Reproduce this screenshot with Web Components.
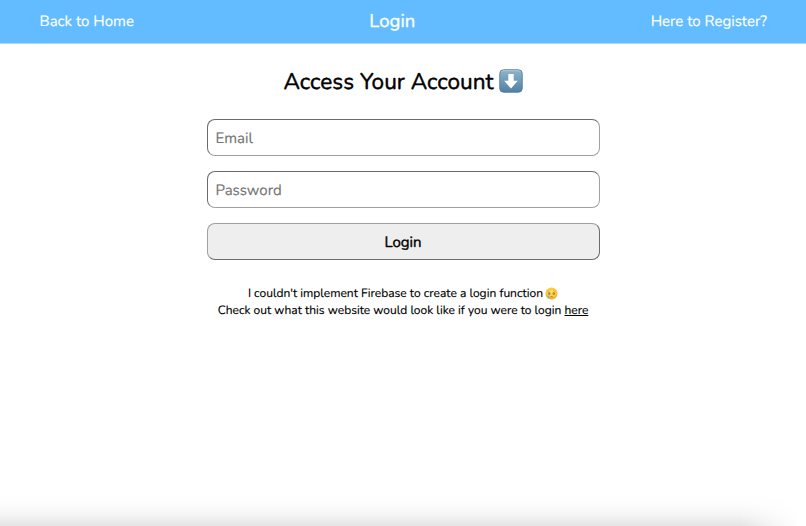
<!DOCTYPE html>
<html lang="en">
<head>
<meta charset="UTF-8">
<title>Login</title>
<style>
    body {
        margin: 0;
        height: 526px;
        overflow: hidden;
        background: #fff;
        color: #000;
        font-family: Nunito, Lato, sans-serif;
        text-rendering: geometricPrecision;
    }
</style>
</head>
<body>
<login-page>
    <nav-bar slot="nav">
        <span slot="left">Back to Home</span>
        <span slot="title">Login</span>
        <span slot="right">Here to Register?</span>
    </nav-bar>
    <page-heading>Access Your Account</page-heading>
    <login-form>
        <text-field placeholder="Email" type="email"></text-field>
        <text-field placeholder="Password" type="password"></text-field>
        <submit-button>Login</submit-button>
    </login-form>
    <login-note></login-note>
</login-page>

<script>
class LoginPage extends HTMLElement {
    constructor() {
        super();
        this.attachShadow({ mode: 'open' });
        this.shadowRoot.innerHTML = `
            <style>
                :host {
                    display: flex;
                    flex-direction: column;
                    height: 526px;
                }
                main {
                    flex: 1;
                    display: flex;
                    flex-direction: column;
                    align-items: center;
                }
                .shade {
                    height: 30px;
                    background: linear-gradient(to bottom, rgba(0, 0, 0, 0) 0%, rgba(0, 0, 0, 0.012) 30%, rgba(0, 0, 0, 0.045) 65%, rgba(0, 0, 0, 0.105) 100%);
                    -webkit-mask-image: linear-gradient(to right, #000 740px, rgba(0, 0, 0, 0.4) 772px, transparent 800px);
                    mask-image: linear-gradient(to right, #000 740px, rgba(0, 0, 0, 0.4) 772px, transparent 800px);
                }
            </style>
            <slot name="nav"></slot>
            <main><slot></slot></main>
            <div class="shade"></div>
        `;
    }
}

class NavBar extends HTMLElement {
    constructor() {
        super();
        this.attachShadow({ mode: 'open' });
        this.shadowRoot.innerHTML = `
            <style>
                :host {
                    display: flex;
                    justify-content: space-between;
                    align-items: center;
                    box-sizing: border-box;
                    height: 44px;
                    padding: 0 39px 0 39.5px;
                    background: linear-gradient(#62bcff 43px, #a8daff 43px);
                    color: #fff;
                    font-size: 15px;
                    line-height: 22px;
                    -webkit-text-stroke: 0.15px #fff;
                }
                .title {
                    padding-bottom: 2px;
                    font-size: 18.5px;
                    -webkit-text-stroke: 0.4px #fff;
                }
            </style>
            <div><slot name="left"></slot></div>
            <div class="title"><slot name="title"></slot></div>
            <div><slot name="right"></slot></div>
        `;
    }
}

class PageHeading extends HTMLElement {
    constructor() {
        super();
        this.attachShadow({ mode: 'open' });
        this.shadowRoot.innerHTML = `
            <style>
                :host {
                    display: flex;
                    align-items: center;
                    gap: 5px;
                    height: 32px;
                    margin-top: 21px;
                }
                h1 {
                    margin: 0;
                    padding-top: 1px;
                    font-size: 22.6px;
                    font-weight: 400;
                    line-height: 32px;
                    -webkit-text-stroke: 0.45px #000;
                }
                svg {
                    display: block;
                    margin-top: -1px;
                }
            </style>
            <h1><slot></slot></h1>
            <svg width="24" height="24" viewBox="0 0 24 24">
                <defs>
                    <linearGradient id="key" x1="0" y1="0" x2="0" y2="1">
                        <stop offset="0" stop-color="#8db5cc"/>
                        <stop offset="1" stop-color="#527fa4"/>
                    </linearGradient>
                </defs>
                <rect x="0.7" y="0.7" width="22.6" height="22.6" rx="4" fill="url(#key)" stroke="#55778f" stroke-width="0.8"/>
                <path d="M2.5 3.2 Q3 1.7 5 1.7 H19 Q21 1.7 21.5 3.2" fill="none" stroke="#b7d2e0" stroke-width="0.7"/>
                <path d="M9.3 5 H14.7 V11.7 H18.8 L12 19.6 L5.2 11.7 H9.3 Z" fill="#fff"/>
            </svg>
        `;
    }
}

class LoginForm extends HTMLElement {
    constructor() {
        super();
        this.attachShadow({ mode: 'open' });
        this.shadowRoot.innerHTML = `
            <style>
                :host {
                    display: block;
                    width: 393px;
                    margin-top: 22px;
                }
                form {
                    display: flex;
                    flex-direction: column;
                    gap: 15px;
                }
            </style>
            <form><slot></slot></form>
        `;
    }
}

class TextField extends HTMLElement {
    constructor() {
        super();
        this.attachShadow({ mode: 'open' });
        this.shadowRoot.innerHTML = `
            <style>
                :host {
                    display: block;
                    height: 37px;
                }
                input {
                    display: block;
                    box-sizing: border-box;
                    width: 100%;
                    height: 37px;
                    padding: 2px 8px 0;
                    border: 1px solid;
                    border-color: #6c6c6c #a0a0a0 #a0a0a0 #6c6c6c;
                    border-radius: 8px;
                    background: #fff;
                    font: inherit;
                    font-size: 15px;
                    text-rendering: inherit;
                    outline: none;
                }
                input::placeholder {
                    color: #757575;
                    opacity: 1;
                    -webkit-text-stroke: 0.15px #757575;
                }
            </style>
            <input type="${this.getAttribute('type')}" placeholder="${this.getAttribute('placeholder')}">
        `;
    }
}

class SubmitButton extends HTMLElement {
    constructor() {
        super();
        this.attachShadow({ mode: 'open' });
        this.shadowRoot.innerHTML = `
            <style>
                :host {
                    display: block;
                    height: 37px;
                }
                button {
                    display: block;
                    box-sizing: border-box;
                    width: 100%;
                    height: 37px;
                    padding: 2px 0 0;
                    border: 1px solid;
                    border-color: #a0a0a0 #6c6c6c #6c6c6c #a0a0a0;
                    border-radius: 8px;
                    background: #eee;
                    color: #000;
                    font: inherit;
                    font-size: 15px;
                    text-rendering: inherit;
                    -webkit-text-stroke: 0.4px #000;
                }
            </style>
            <button type="button"><slot></slot></button>
        `;
    }
}

class LoginNote extends HTMLElement {
    constructor() {
        super();
        this.attachShadow({ mode: 'open' });
        this.shadowRoot.innerHTML = `
            <style>
                :host {
                    display: flex;
                    flex-direction: column;
                    align-items: center;
                    margin-top: 26px;
                    font-size: 12.03px;
                    line-height: 16.5px;
                    white-space: nowrap;
                    -webkit-text-stroke: 0.15px #000;
                }
                .line {
                    display: flex;
                    align-items: center;
                    gap: 2px;
                }
                svg {
                    display: block;
                    margin-top: -2px;
                }
                a {
                    color: inherit;
                    text-decoration: underline;
                }
            </style>
            <div class="line">
                <span>I couldn't implement Firebase to create a login function</span>
                <svg width="13" height="13" viewBox="0 0 26 26">
                    <defs>
                        <radialGradient id="face" cx="0.5" cy="0.4" r="0.6">
                            <stop offset="0" stop-color="#ffe45a"/>
                            <stop offset="0.7" stop-color="#fbc636"/>
                            <stop offset="1" stop-color="#ea9e25"/>
                        </radialGradient>
                    </defs>
                    <circle cx="13" cy="13" r="12" fill="url(#face)"/>
                    <path d="M5 8.5 Q7.5 8 9 6.5 M21 8.5 Q18.5 8 17 6.5" fill="none" stroke="#c08a28" stroke-width="1"/>
                    <ellipse cx="8.5" cy="13" rx="2.2" ry="2.5" fill="#8a6a3c"/>
                    <ellipse cx="17.5" cy="13" rx="2.2" ry="2.5" fill="#8a6a3c"/>
                    <circle cx="8" cy="12.3" r="0.9" fill="#fff"/>
                    <circle cx="17" cy="12.3" r="0.9" fill="#fff"/>
                    <path d="M10.5 20 Q13 18.5 15.5 20" fill="none" stroke="#8e5b1b" stroke-width="1.5"/>
                    <path d="M6.5 16 Q9 19 8.5 21.5 Q7.5 23.5 5.7 22 Q4.7 20 6.5 16 Z" fill="#62b8dc"/>
                </svg>
            </div>
            <div class="line">
                <span>Check out what this website would look like if you were to login <a>here</a></span>
            </div>
        `;
    }
}

customElements.define('login-page', LoginPage);
customElements.define('nav-bar', NavBar);
customElements.define('page-heading', PageHeading);
customElements.define('login-form', LoginForm);
customElements.define('text-field', TextField);
customElements.define('submit-button', SubmitButton);
customElements.define('login-note', LoginNote);
</script>
</body>
</html>
